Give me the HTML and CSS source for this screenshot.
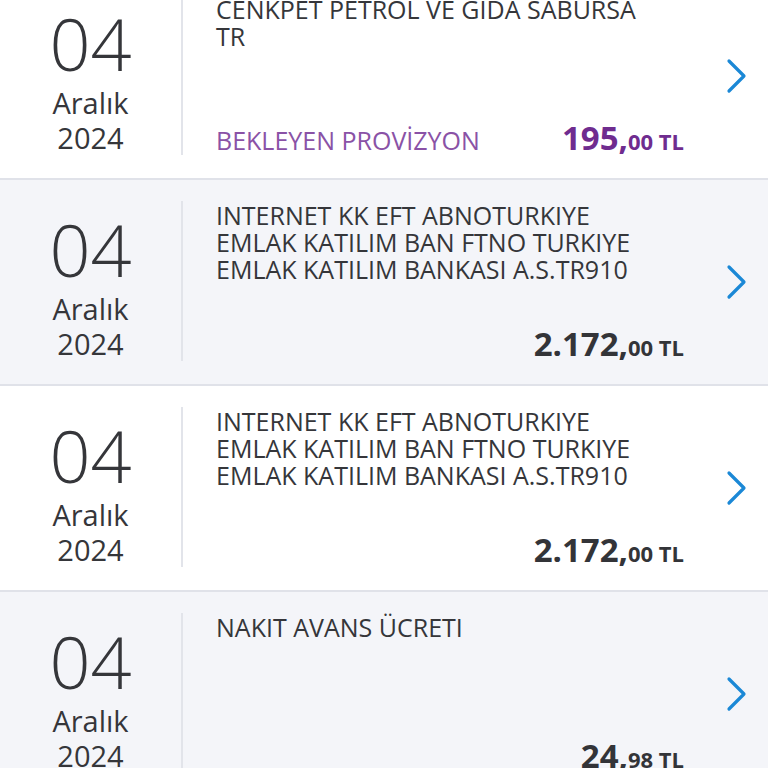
FILE: index.html
```html
<!DOCTYPE html>
<html lang="tr">
<head>
<meta charset="utf-8">
<link rel="stylesheet" href="styles.css">
</head>
<body>
<div class="list">
  <div class="row white">
    <div class="date"><div class="day">04</div><div class="month">Aralık</div><div class="year">2024</div></div>
    <div class="content">
      <div class="desc">CENKPET PETROL VE GIDA SABURSA<br>TR</div>
      <div class="bottom"><span class="status">BEKLEYEN PROVİZYON</span><span class="amount purple"><span class="int">195,</span><span class="dec">00 TL</span></span></div>
    </div>
    <div class="arrow"><svg width="22" height="36" viewBox="0 0 22 36"><polyline points="3,3 18,18 3,33" fill="none" stroke="#1b88d6" stroke-width="3.2" stroke-linecap="round" stroke-linejoin="round"/></svg></div>
  </div>
  <div class="row gray">
    <div class="date"><div class="day">04</div><div class="month">Aralık</div><div class="year">2024</div></div>
    <div class="content">
      <div class="desc">INTERNET KK EFT ABNOTURKIYE<br>EMLAK KATILIM BAN FTNO TURKIYE<br>EMLAK KATILIM BANKASI A.S.TR910</div>
      <div class="bottom"><span class="status"></span><span class="amount"><span class="int">2.172,</span><span class="dec">00 TL</span></span></div>
    </div>
    <div class="arrow"><svg width="22" height="36" viewBox="0 0 22 36"><polyline points="3,3 18,18 3,33" fill="none" stroke="#1b88d6" stroke-width="3.2" stroke-linecap="round" stroke-linejoin="round"/></svg></div>
  </div>
  <div class="row white">
    <div class="date"><div class="day">04</div><div class="month">Aralık</div><div class="year">2024</div></div>
    <div class="content">
      <div class="desc">INTERNET KK EFT ABNOTURKIYE<br>EMLAK KATILIM BAN FTNO TURKIYE<br>EMLAK KATILIM BANKASI A.S.TR910</div>
      <div class="bottom"><span class="status"></span><span class="amount"><span class="int">2.172,</span><span class="dec">00 TL</span></span></div>
    </div>
    <div class="arrow"><svg width="22" height="36" viewBox="0 0 22 36"><polyline points="3,3 18,18 3,33" fill="none" stroke="#1b88d6" stroke-width="3.2" stroke-linecap="round" stroke-linejoin="round"/></svg></div>
  </div>
  <div class="row gray">
    <div class="date"><div class="day">04</div><div class="month">Aralık</div><div class="year">2024</div></div>
    <div class="content">
      <div class="desc">NAKIT AVANS ÜCRETI</div>
      <div class="bottom"><span class="status"></span><span class="amount"><span class="int">24,</span><span class="dec">98 TL</span></span></div>
    </div>
    <div class="arrow"><svg width="22" height="36" viewBox="0 0 22 36"><polyline points="3,3 18,18 3,33" fill="none" stroke="#1b88d6" stroke-width="3.2" stroke-linecap="round" stroke-linejoin="round"/></svg></div>
  </div>
</div>
</body>
</html>
```
FILE: styles.css
```css
html, body {
  margin: 0;
  padding: 0;
  background: #ffffff;
  overflow: hidden;
}
body {
  font-family: "Open Sans", "Noto Sans", sans-serif;
  color: #35363a;
  width: 768px;
  height: 768px;
}
.list {
  margin-top: -26px;
}
.row {
  display: flex;
  height: 204px;
  border-bottom: 2px solid #e0e2e9;
}
.row.white { background: #ffffff; }
.row.gray { background: #f4f5f9; }
.date {
  width: 183px;
  flex: none;
  margin: 21px 0 23px 0;
  padding-top: 16px;
  box-sizing: border-box;
  border-right: 2px solid #e2e4ea;
  display: flex;
  flex-direction: column;
  align-items: center;
  justify-content: center;
}
.day {
  font-size: 72px;
  font-weight: 300;
  line-height: 64px;
  margin-bottom: 10px;
}
.month, .year {
  font-size: 29px;
  line-height: 35px;
  font-weight: 400;
}
.content {
  flex: 1;
  display: flex;
  flex-direction: column;
  justify-content: space-between;
  padding: 22px 0 18px 33px;
}
.desc {
  font-size: 25px;
  line-height: 27px;
}
.bottom {
  display: flex;
  justify-content: space-between;
  align-items: baseline;
}
.status {
  font-size: 25px;
  color: #8a52a6;
}
.amount {
  font-weight: 700;
  color: #333438;
}
.amount.purple { color: #6f2c8f; }
.int { font-size: 33px; }
.dec { font-size: 22px; }
.arrow {
  width: 84px;
  flex: none;
  display: flex;
  align-items: center;
  padding-left: 42px;
  box-sizing: border-box;
}
```
